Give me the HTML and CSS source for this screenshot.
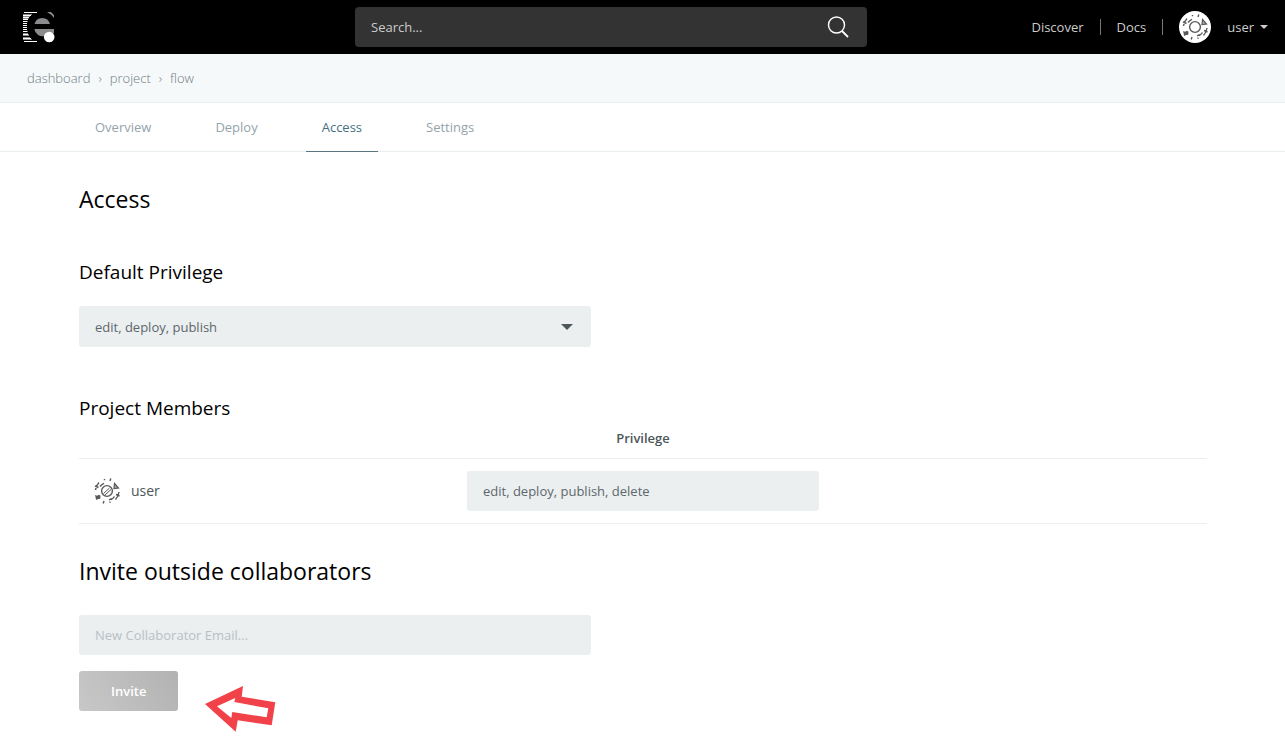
FILE: index.html
```html
<!DOCTYPE html>
<html lang="en">
<head>
<meta charset="utf-8">
<meta name="viewport" content="width=device-width, initial-scale=1">
<title>Access</title>
<link rel="stylesheet" href="styles.css">
</head>
<body>
<svg class="defs" aria-hidden="true">
  <symbol id="avatar" viewBox="0 0 32 32">
    <g fill="none" stroke="#58595b" stroke-width="1.400">
      <circle cx="16" cy="16" r="5.400"/>
      <path d="M9 11.500Q10.500 9.300 13 8.300M20 24.500Q22.500 23.300 23.500 21.500M4.500 15Q5 10.500 8 7.500M4 11l3.500 1.500M28 17Q27.500 21.500 24.500 24.500M28.500 21L25 19.500M19 6l.8-2.500M13 26l-.8 2.500M18 25l2.500-1.500M13.500 4v1.300M19 26.500v1.300"/>
    </g>
    <path d="M23.500 8.500l4 4.500-4.500.5z" fill="#aaa" stroke="#58595b" stroke-width="1.200"/>
    <path d="M4 20l2 .7 2-.9 1.500 1-.2 3-2 .3-2.300.9-.3-2.200z" fill="#58595b"/>
  </symbol>
</svg>
<header class="topbar">
  <a class="logo" href="#" aria-label="Home">
    <svg width="32" height="32" viewBox="0 0 32 32">
      <path d="M0 3.500h9M0 5.500h7M0 7.500h5.500M0 22.500h5M0 24.500h6M0 26.500h7M0 28.500h9" stroke="#8b8a8c"/>
      <path d="M1 1.500h13M0 4.500h8M0 6.500h6M0 8.500h5M0 10.500h4.500M0 12.500h4M0 14.500h4M0 16.500h4M0 18.500h4M0 20.500h4.500M0 23.500h5.500M0 27.500h8M1 30.500h13" stroke="#fff"/>
      <path d="M11.500 13a8 8 0 0 1 15.500 0zM11.300 18H31v4l-5 3-4 0a8.500 8.500 0 0 1-10.700-7zM24 1h4l3 3v3q-3-4-7-6z" fill="#8b8a8c"/>
      <circle cx="26.200" cy="26" r="5.300" fill="#fff"/>
    </svg>
  </a>
  <form class="search" role="search">
    <input class="search-input" type="search" placeholder="Search..." aria-label="Search">
    <button class="search-button" type="button" aria-label="Search">
      <svg width="22" height="22" viewBox="0 0 22 22" fill="none" stroke="#fff" stroke-width="1.400"><circle cx="9.500" cy="9" r="8"/><path d="M15 15l6 6" stroke-width="1.800"/></svg>
    </button>
  </form>
  <nav class="nav" aria-label="Main">
    <a class="nav-link" href="#">Discover</a>
    <a class="nav-link nav-divided" href="#">Docs</a>
    <button class="user-menu" type="button">
      <svg class="avatar-round" width="32" height="32"><use href="#avatar"/></svg>
      <span>user</span>
      <svg class="caret" width="8" height="4" viewBox="0 0 8 4"><path d="M0 0h8L4 4z" fill="currentColor"/></svg>
    </button>
  </nav>
</header>
<nav class="crumbs" aria-label="Breadcrumb">
  <a href="#">dashboard</a><span>›</span><a href="#">project</a><span>›</span><a href="#">flow</a>
</nav>
<nav class="tabs" aria-label="Project">
  <a class="tab" href="#">Overview</a>
  <a class="tab" href="#">Deploy</a>
  <a class="tab tab-active" href="#" aria-current="page">Access</a>
  <a class="tab" href="#">Settings</a>
</nav>
<main class="content">
  <h1 class="title">Access</h1>
  <h2 class="subtitle"><label for="privilege">Default Privilege</label></h2>
  <div class="select-wrap">
    <select class="field select" id="privilege"><option>edit, deploy, publish</option></select>
    <svg class="select-arrow" width="12" height="6" viewBox="0 0 12 6"><path d="M0 0h12L6 6z" fill="#4d5659"/></svg>
  </div>
  <h2 class="subtitle members-title">Project Members</h2>
  <table class="members">
    <thead><tr><td></td><th scope="col">Privilege</th><td></td></tr></thead>
    <tbody><tr>
      <td>
        <div class="member">
          <svg width="32" height="32"><use href="#avatar"/><path d="M12.500 18.500l6-5.500M14 20l6-5.500" stroke="#58595b"/></svg>
          <span>user</span>
        </div>
      </td>
      <td><select class="field" aria-label="Privilege for user"><option>edit, deploy, publish, delete</option></select></td>
      <td></td>
    </tr></tbody>
  </table>
  <h1 class="title invite-title">Invite outside collaborators</h1>
  <form class="invite">
    <input class="field" type="email" placeholder="New Collaborator Email..." aria-label="New Collaborator Email">
    <div class="invite-action">
      <button class="invite-button" type="button">Invite</button>
      <svg class="pointer" width="72" height="46" viewBox="0 0 72 46"><path fill="#f04248" fill-rule="evenodd" d="M0 18L38 0l-1.300 10.700L70.300 16.300l-3.600 23L32.700 34.300l-2 11.400zM12 20.300L26.300 32l1-6 34.400 5.300 1.600-9-34-6.300 1-4z"/></svg>
    </div>
  </form>
</main>
</body>
</html>
```

FILE: styles.css
```css
* {
  box-sizing: border-box;
}

body {
  margin: 0;
  background: #fff;
  color: #4d5659;
  font: 13px/20px "Open Sans", "Noto Sans", sans-serif;
}

a {
  color: inherit;
  text-decoration: none;
}

button,
input,
select {
  margin: 0;
  border: 0;
  font: inherit;
}

svg {
  display: block;
  flex: none;
}

.defs {
  position: absolute;
  width: 0;
  height: 0;
}

.topbar {
  display: flex;
  align-items: center;
  height: 54px;
  padding: 0 17px 0 23px;
  background: #000;
  color: #ccc;
}

.logo {
  margin-right: 300px;
}

.search {
  display: flex;
  align-items: center;
  flex: 0 1 512px;
  height: 40px;
  border-radius: 4px;
  background: #333;
}

.search-input {
  flex: 1;
  min-width: 0;
  padding: 0 16px;
  background: none;
  color: #ccc;
}

.search-input::placeholder {
  color: #ccc;
  opacity: 1;
}

.search-button {
  padding: 0 18px;
  background: none;
}

.nav {
  display: flex;
  align-items: center;
  margin-left: auto;
}

.nav-link {
  line-height: 16px;
  padding-right: 16px;
}

.nav-divided {
  padding-left: 16px;
  border: solid #777;
  border-width: 0 1px;
}

.user-menu {
  display: flex;
  align-items: center;
  padding: 0 0 0 16px;
  background: none;
  color: #ccc;
}

.avatar-round {
  margin-right: 16px;
  border-radius: 50%;
  background: #fff;
}

.caret {
  margin-left: 6px;
}

.crumbs {
  display: flex;
  align-items: center;
  gap: 8px;
  height: 49px;
  padding: 0 27px;
  border-bottom: 1px solid #e9eeee;
  background: #f5f9fa;
  color: #727c81;
  font-weight: 300;
}

.tabs {
  display: flex;
  gap: 32px;
  padding: 0 79px;
  border-bottom: 1px solid #e9eeee;
  color: #95a3ab;
}

.tab {
  margin-bottom: -1px;
  padding: 14px 16px;
  border-bottom: 1px solid transparent;
}

.tab-active {
  border-color: #5b7580;
  color: #47707f;
}

.content {
  padding: 31px 78px 40px 79px;
}

.title,
.subtitle {
  margin: 0;
  color: #000;
  font-weight: 400;
}

.title {
  font-size: 23px;
  line-height: 32px;
}

.subtitle {
  margin-top: 45px;
  font-size: 19px;
  line-height: 24px;
}

.field {
  display: block;
  width: 100%;
  height: 40px;
  padding: 0 16px;
  border-radius: 3px;
  background: #ebeff0;
  color: #5d676b;
  opacity: 1;
  appearance: none;
}

.field::placeholder {
  color: #b9c0c5;
  opacity: 1;
}

.select-wrap {
  position: relative;
  max-width: 512px;
  margin-top: 22px;
}

.select {
  height: 41px;
}

.select-arrow {
  position: absolute;
  top: 18px;
  right: 18px;
  pointer-events: none;
}

.members-title {
  margin-top: 49px;
}

.members {
  width: 100%;
  border-collapse: separate;
  border-spacing: 0;
  table-layout: fixed;
}

.members th,
.members td {
  padding: 0 12px;
  border-bottom: 1px solid #e9eeee;
}

.members th {
  height: 39px;
  padding-bottom: 2px;
  font-weight: 600;
}

.members tbody td {
  height: 65px;
}

.member {
  display: flex;
  align-items: center;
  gap: 8px;
  font-size: 14px;
}

.invite-title {
  margin-top: 31px;
}

.invite {
  max-width: 512px;
  margin-top: 28px;
}

.invite-action {
  position: relative;
  margin-top: 16px;
}

.invite-button {
  height: 40px;
  padding: 0 32px;
  border-radius: 3px;
  background: linear-gradient(60deg, #c8c8c8, #b2b2b2);
  color: #fff;
  font-weight: 600;
}

.pointer {
  position: absolute;
  top: 15px;
  left: 126px;
}
```
